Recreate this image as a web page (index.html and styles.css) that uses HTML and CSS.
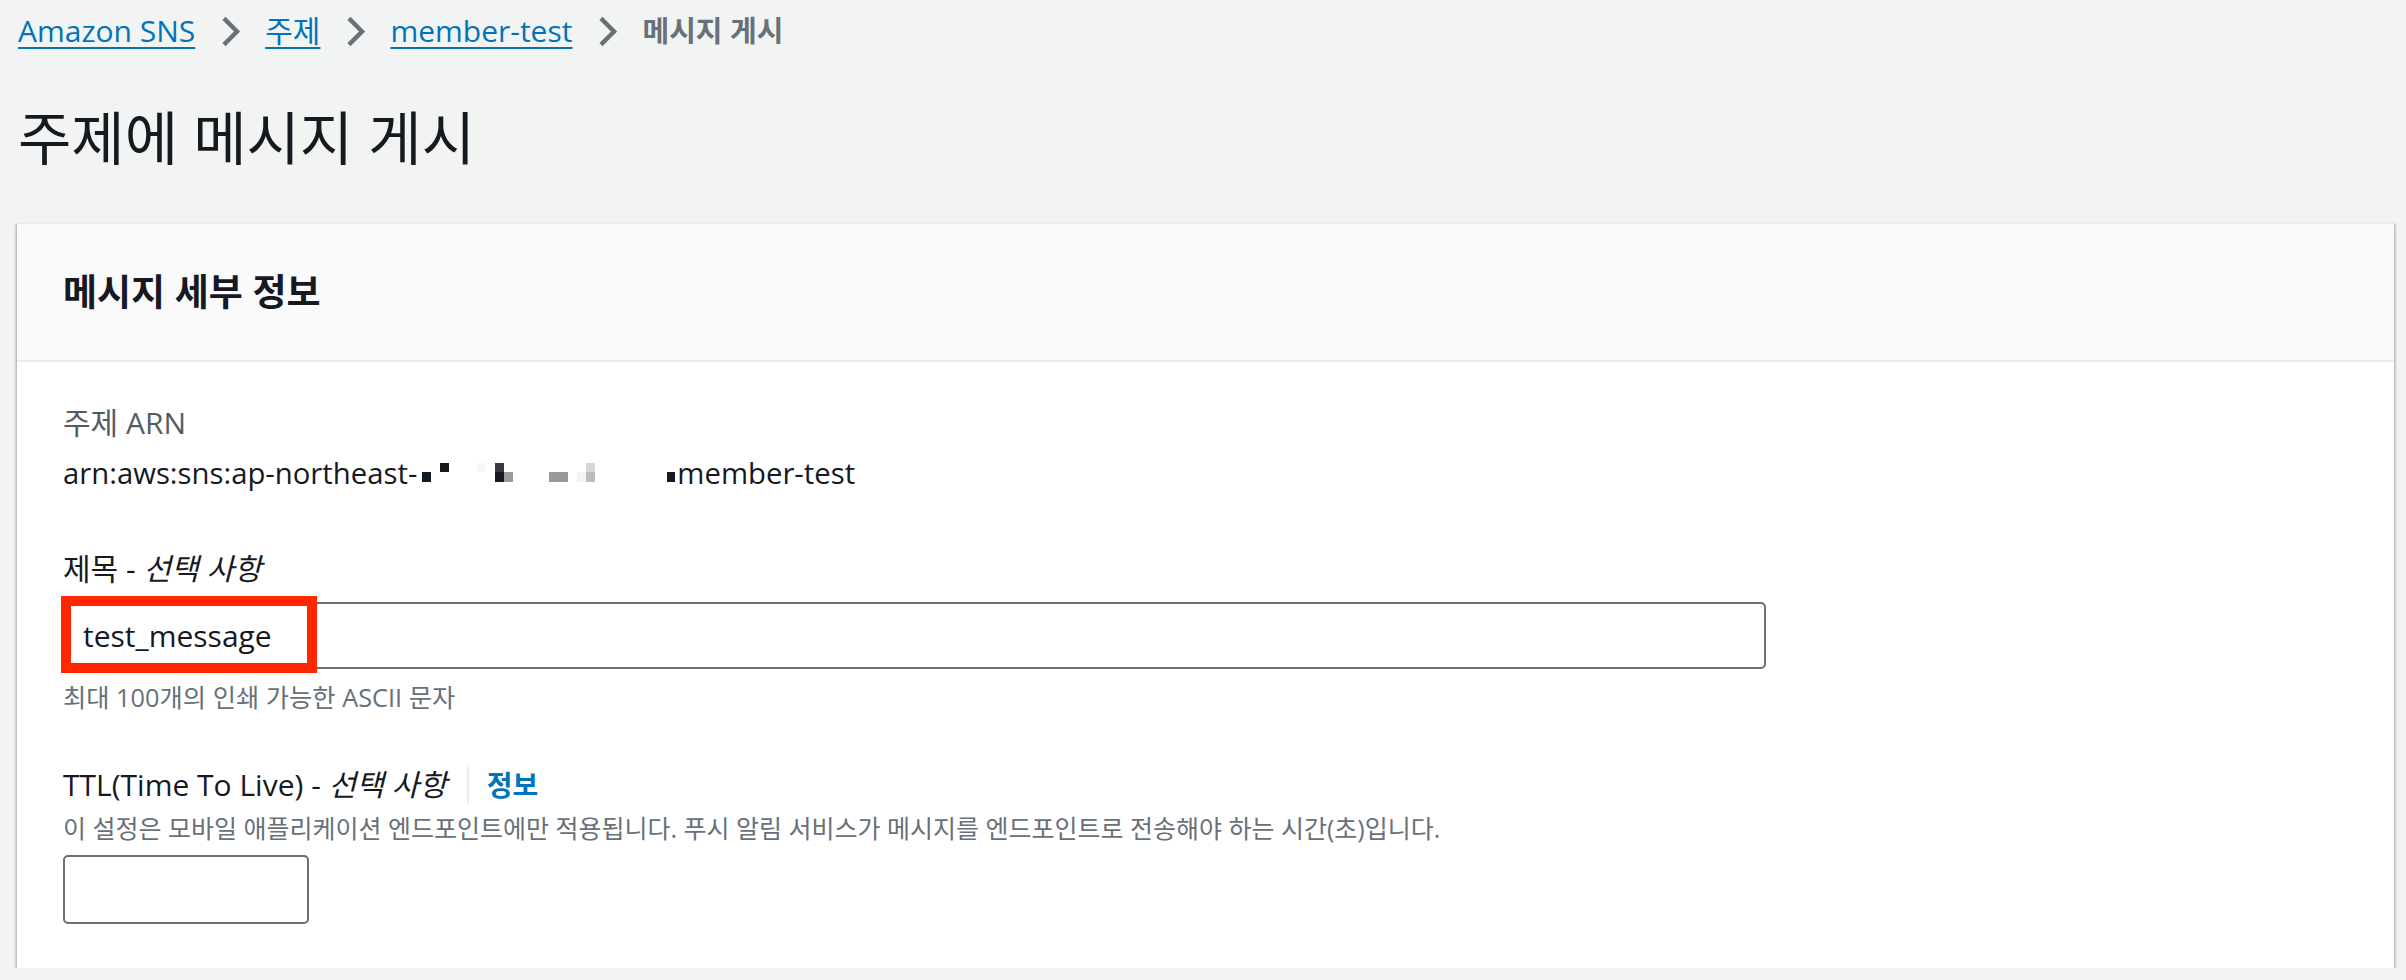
FILE: index.html
```html
<!DOCTYPE html>
<html lang="ko">
<head>
<meta charset="utf-8">
<title>주제에 메시지 게시</title>
<link rel="stylesheet" href="styles.css">
</head>
<body>
<div class="page">
  <nav class="breadcrumbs">
    <a class="crumb-link" href="#">Amazon SNS</a>
    <svg class="chev" viewBox="0 0 16 16"><polyline points="5 2 11 8 5 14"/></svg>
    <a class="crumb-link" href="#">주제</a>
    <svg class="chev" viewBox="0 0 16 16"><polyline points="5 2 11 8 5 14"/></svg>
    <a class="crumb-link" href="#">member-test</a>
    <svg class="chev" viewBox="0 0 16 16"><polyline points="5 2 11 8 5 14"/></svg>
    <span class="crumb-current">메시지 게시</span>
  </nav>

  <h1 class="title">주제에 메시지 게시</h1>

  <section class="card">
    <header class="card-header">
      <h2 class="card-title">메시지 세부 정보</h2>
    </header>
    <div class="card-body">
      <div class="kv">
        <div class="kv-label">주제 ARN</div>
        <div class="kv-value">arn:aws:sns:ap-northeast-<span class="redact"><i class="px p1"></i><i class="px p2"></i><i class="px p3"></i><i class="px p4"></i><i class="px p5"></i><i class="px p6"></i><i class="px p7"></i><i class="px p8"></i><i class="px p9"></i><i class="px p10"></i></span>member-test</div>
      </div>

      <div class="field">
        <label class="field-label">제목 - <em>선택 사항</em></label>
        <div class="input-wrap">
          <div class="input wide">test_message</div>
          <div class="annot"></div>
        </div>
        <div class="hint">최대 100개의 인쇄 가능한 ASCII 문자</div>
      </div>

      <div class="field ttl">
        <div class="label-row">
          <label class="field-label">TTL(Time To Live) - <em>선택 사항</em></label>
          <span class="sep"></span>
          <a class="info" href="#">정보</a>
        </div>
        <div class="desc">이 설정은 모바일 애플리케이션 엔드포인트에만 적용됩니다. 푸시 알림 서비스가 메시지를 엔드포인트로 전송해야 하는 시간(초)입니다.</div>
        <div class="input small"></div>
      </div>
    </div>
  </section>
</div>
</body>
</html>
```

FILE: styles.css
```css
* { box-sizing: border-box; }

html, body {
  margin: 0;
  padding: 0;
  background: #f2f3f3;
}

body {
  font-family: "Open Sans", "Noto Sans CJK KR", sans-serif;
  color: #16191f;
  font-size: 30px;
}

.page {
  padding: 7px 12px 0 17px;
}

/* breadcrumbs */
.breadcrumbs {
  display: flex;
  align-items: center;
  height: 48px;
  padding-left: 1px;
  font-size: 30px;
  line-height: 48px;
}

.crumb-link {
  color: #0073bb;
  text-decoration: underline;
  text-decoration-thickness: 2px;
  text-underline-offset: 5px;
}

.chev {
  width: 35px;
  height: 35px;
  margin: 0 17px 0 18px;
  fill: none;
  stroke: #687078;
  stroke-width: 2;
}

.crumb-current {
  color: #687078;
  font-weight: 700;
  font-size: 29px;
}

/* title */
.title {
  margin: 46px 0 0 1px;
  font-size: 58px;
  line-height: 74px;
  font-weight: 400;
  color: #16191f;
}

/* card */
.card {
  margin-top: 47px;
  background: #fff;
  box-shadow: 0 2px 2px 0 rgba(0, 28, 36, 0.3), 2px 2px 2px 0 rgba(0, 28, 36, 0.15), -2px 2px 2px 0 rgba(0, 28, 36, 0.15);
  border-top: 2px solid #eaeded;
}

.card-header {
  height: 138px;
  display: flex;
  align-items: center;
  padding: 0 46px;
  background: #fafafa;
  border-bottom: 2px solid #eaeded;
}

.card-title {
  margin: 0;
  font-size: 37px;
  line-height: 50px;
  font-weight: 700;
  color: #16191f;
}

.card-body {
  padding: 37px 46px 44px;
}

.kv-label {
  font-size: 30px;
  line-height: 48px;
  color: #545b64;
}

.kv-value {
  font-size: 29.3px;
  line-height: 52px;
  display: flex;
  align-items: center;
  white-space: nowrap;
}

.redact {
  position: relative;
  display: inline-block;
  width: 256px;
  height: 30px;
  margin: 0 2px 0 2px;
}

.px {
  position: absolute;
  display: block;
}

.p1 { left: 3px; top: 14px; width: 9px; height: 10px; background: #16191f; }
.p2 { left: 21px; top: 5px; width: 9px; height: 9px; background: #16191f; }
.p3 { left: 58px; top: 5px; width: 9px; height: 9px; background: #f7f7f7; }
.p4 { left: 76px; top: 5px; width: 9px; height: 9px; background: #3a3b40; }
.p5 { left: 76px; top: 14px; width: 9px; height: 10px; background: #16191f; }
.p6 { left: 85px; top: 14px; width: 9px; height: 10px; background: #9a9b9c; }
.p7 { left: 130px; top: 14px; width: 19px; height: 10px; background: #98999a; }
.p8 { left: 158px; top: 14px; width: 9px; height: 10px; background: #f4f4f4; }
.p9 { left: 167px; top: 5px; width: 9px; height: 9px; background: #d6d6d6; }
.p10 { left: 167px; top: 14px; width: 9px; height: 10px; background: #bcbcbc; }
.redact::after {
  content: "";
  position: absolute;
  right: 0;
  top: 14px;
  width: 8px;
  height: 10px;
  background: #16191f;
}

/* form fields */
.field {
  margin-top: 46px;
}

.field-label {
  display: block;
  font-size: 30px;
  line-height: 48px;
  color: #16191f;
}

.field-label em {
  font-style: italic;
}

.input-wrap {
  position: relative;
  margin-top: 9px;
  width: 1703px;
}

.input {
  border: 2px solid #687078;
  border-radius: 5px;
  background: #fff;
}

.input.wide {
  width: 1703px;
  height: 67px;
  padding: 0 18px;
  font-size: 30px;
  line-height: 63px;
  color: #16191f;
}

.annot {
  position: absolute;
  left: -2px;
  top: -6px;
  width: 256px;
  height: 77px;
  border: 10px solid #ff2600;
}

.hint {
  margin-top: 11px;
  font-size: 25.3px;
  line-height: 35px;
  color: #687078;
}

.field.ttl {
  margin-top: 46px;
}

.label-row {
  display: flex;
  align-items: center;
}

.sep {
  width: 2px;
  height: 36px;
  background: #eaeded;
  margin: 0 18px 0 20px;
}

.info {
  font-size: 28px;
  line-height: 48px;
  font-weight: 700;
  color: #0073bb;
  text-decoration: none;
}

.desc {
  margin-top: 2px;
  font-size: 25px;
  line-height: 35px;
  color: #687078;
}

.input.small {
  margin-top: 9px;
  width: 246px;
  height: 69px;
}
```
